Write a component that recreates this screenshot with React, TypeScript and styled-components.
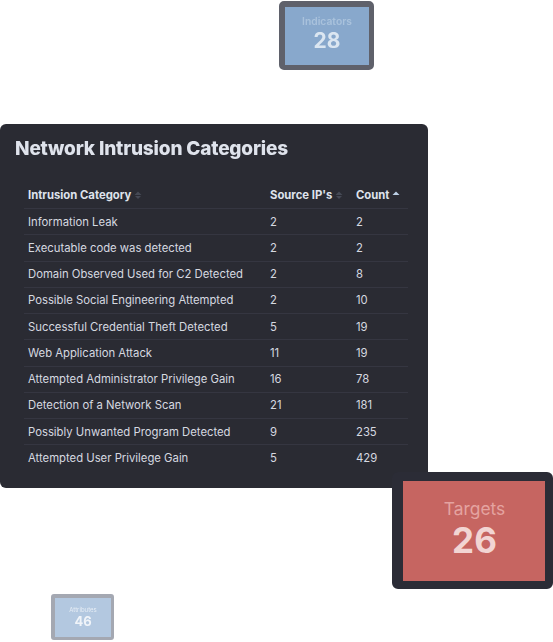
import React from 'react'
import styled, { createGlobalStyle } from 'styled-components'

const rows: [string, number, number][] = [
  ['Information Leak', 2, 2],
  ['Executable code was detected', 2, 2],
  ['Domain Observed Used for C2 Detected', 2, 8],
  ['Possible Social Engineering Attempted', 2, 10],
  ['Successful Credential Theft Detected', 5, 19],
  ['Web Application Attack', 11, 19],
  ['Attempted Administrator Privilege Gain', 16, 78],
  ['Detection of a Network Scan', 21, 181],
  ['Possibly Unwanted Program Detected', 9, 235],
  ['Attempted User Privilege Gain', 5, 429],
]

const SortIcon = ({ active }: { active?: boolean }) => (
  <SortSvg viewBox="0 0 8 10" width="8" height="10">
    <path d="M4 1.5 L7.5 5 H0.5 Z" fill={active ? '#bcd0e6' : '#454955'} />
    {!active && <path d="M4 9 L1 6 H7 Z" fill="#454955" />}
  </SortSvg>
)

const App = () => {
  return (
    <Canvas>
      <GlobalStyle />
      <Tile $x={279} $y={1} $w={95} $h={69} $border="6px 5px 5px 6px" $radius={5} $pad="0 0 4px" $frame="#5f616b" $fill="#88a8cc" $blur={0.5}>
        <TileLabel $size={10.3} $weight={600} $color="#a9c2dc">Indicators</TileLabel>
        <TileValue $size={21} $line={25} $color="#dbe6f1">28</TileValue>
      </Tile>
      <Panel>
        <Title>Network Intrusion Categories</Title>
        <Table>
          <thead>
            <tr>
              <Head $w={242}>Intrusion Category <SortIcon /></Head>
              <Head $w={86}>Source IP's <SortIcon /></Head>
              <Head>Count <SortIcon active /></Head>
            </tr>
          </thead>
          <tbody>
            {rows.map(([name, sources, count]) => (
              <tr key={name}>
                <Cell>{name}</Cell>
                <Cell>{sources}</Cell>
                <Cell>{count}</Cell>
              </tr>
            ))}
          </tbody>
        </Table>
      </Panel>
      <Tile $x={392} $y={472} $w={161} $h={117} $border="9px 8px 8px 11px" $radius={6} $pad="0 0 4px 1px" $frame="#2b2c36" $fill="#c66561">
        <TileLabel $size={17.4} $color="#e4a3a0">Targets</TileLabel>
        <TileValue $size={35} $line={40} $color="#f2d5d3">26</TileValue>
      </Tile>
      <Tile $x={51} $y={594} $w={63} $h={46} $border="4px 3px 3px 4px" $radius={3} $pad="0" $frame="#a4a8b2" $fill="#b3c8e0" $blur={0.7}>
        <TileLabel $size={6} $color="#e6edf5">Attributes</TileLabel>
        <TileValue $size={13} $line={16} $color="#f0f4f9">46</TileValue>
      </Tile>
    </Canvas>
  )
}

export default App

const GlobalStyle = createGlobalStyle`
html, body {
  margin: 0;
  padding: 0;
  background: white;
  font-family: Inter, "Liberation Sans", sans-serif;
}
`
const Canvas = styled.div`
position: relative;
width: 553px;
height: 642px;
overflow: hidden;
`
const Panel = styled.div`
position: absolute;
left: 0;
top: 124px;
width: 428px;
height: 364px;
box-sizing: border-box;
padding: 13px 20px 0 15px;
background: #2a2b33;
border-radius: 6px;
`
const Title = styled.h2`
margin: 0 0 22px;
font-size: 19px;
line-height: 24px;
font-weight: 800;
letter-spacing: -0.17px;
color: #dfe3ec;
filter: blur(0.25px);
`
const Table = styled.table`
width: 384px;
margin-left: 9px;
border-collapse: collapse;
table-layout: fixed;
`
const Head = styled.th<{ $w?: number }>`
width: ${(p) => (p.$w ? `${p.$w}px` : 'auto')};
height: 25.6px;
padding: 0 4px 1px;
box-sizing: border-box;
text-align: left;
font-size: 11.3px;
font-weight: 700;
color: #dfe3ec;
border-bottom: 1px solid #353641;
white-space: nowrap;
`
const SortSvg = styled.svg`
vertical-align: -1px;
`
const Cell = styled.td`
height: 26.25px;
padding: 0 4px;
box-sizing: border-box;
font-size: 11.3px;
color: #d6d9e0;
border-bottom: 1px solid #353641;
white-space: nowrap;
tr:last-child & {
  border-bottom: none;
}
`
const Tile = styled.div<{ $x: number; $y: number; $w: number; $h: number; $border: string; $radius: number; $pad: string; $frame: string; $fill: string; $blur?: number }>`
position: absolute;
left: ${(p) => p.$x}px;
top: ${(p) => p.$y}px;
width: ${(p) => p.$w}px;
height: ${(p) => p.$h}px;
box-sizing: border-box;
display: flex;
flex-direction: column;
align-items: center;
justify-content: center;
padding: ${(p) => p.$pad};
background: ${(p) => p.$fill};
border-style: solid;
border-width: ${(p) => p.$border};
border-color: ${(p) => p.$frame};
border-radius: ${(p) => p.$radius}px;
filter: ${(p) => (p.$blur ? `blur(${p.$blur}px)` : 'none')};
`
const TileLabel = styled.div<{ $size: number; $color: string; $weight?: number }>`
font-size: ${(p) => p.$size}px;
font-weight: ${(p) => p.$weight ?? 400};
line-height: 1.25;
color: ${(p) => p.$color};
`
const TileValue = styled.div<{ $size: number; $line: number; $color: string }>`
font-size: ${(p) => p.$size}px;
line-height: ${(p) => p.$line}px;
font-weight: 700;
color: ${(p) => p.$color};
`
